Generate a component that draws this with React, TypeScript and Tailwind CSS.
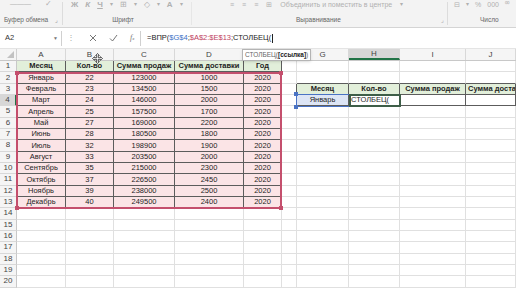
import React from "react"

const cols = [
  { name: "A", w: 49 },
  { name: "B", w: 48 },
  { name: "C", w: 61 },
  { name: "D", w: 69 },
  { name: "E", w: 38 },
  { name: "F", w: 15 },
  { name: "G", w: 52 },
  { name: "H", w: 51 },
  { name: "I", w: 66 },
  { name: "J", w: 50 },
]

const months = ["Январь", "Февраль", "Март", "Апрель", "Май", "Июнь", "Июль", "Август", "Сентябрь", "Октябрь", "Ноябрь", "Декабрь"]
const qty = [22, 23, 24, 25, 27, 28, 32, 33, 35, 37, 39, 40]
const sales = [123000, 134500, 146000, 157500, 169000, 180500, 198900, 203500, 215000, 226500, 238000, 249500]
const delivery = [1000, 1500, 2000, 1700, 2200, 1800, 1900, 2000, 2300, 2450, 2500, 2400]

const ROW_H = "h-[11.33px]"

// which cells belong to a bordered table
function inTable(r: number, c: number) {
  if (r >= 1 && r <= 13 && c >= 0 && c <= 4) return true
  if (r >= 3 && r <= 4 && c >= 6 && c <= 9) return true
  return false
}

function cellBg(r: number, c: number) {
  if (r === 1 && c <= 4) return "bg-[#e2efda] font-bold"
  if (r >= 2 && r <= 13 && c <= 4) return "bg-[#fbe4e6]"
  if (r === 3 && c >= 6) return "bg-[#e2efda] font-bold"
  if (r === 4 && c === 6) return "bg-[#dde5f5]"
  return "bg-white"
}

function cellText(r: number, c: number): string {
  if (r === 1) return ["Месяц", "Кол-во", "Сумма продаж", "Сумма доставки", "Год"][c] ?? ""
  if (r >= 2 && r <= 13) {
    const i = r - 2
    if (c === 0) return months[i]
    if (c === 1) return String(qty[i])
    if (c === 2) return String(sales[i])
    if (c === 3) return String(delivery[i])
    if (c === 4) return "2020"
  }
  if (r === 3) return ["", "", "", "", "", "", "Месяц", "Кол-во", "Сумма продаж", "Сумма доста"][c]
  if (r === 4 && c === 6) return "Январь"
  if (r === 4 && c === 7) return "СТОЛБЕЦ("
  return ""
}

function Cell({ r, c }: { r: number; c: number }) {
  const darkR = inTable(r, c) || inTable(r, c + 1)
  const darkB = inTable(r, c) || inTable(r + 1, c)
  const left = (r === 4 && c === 7) || (r === 3 && c === 9)
  return (
    <div
      style={{ width: cols[c].w }}
      className={`shrink-0 ${ROW_H} border-r border-b overflow-hidden whitespace-nowrap flex items-center text-[7.5px] leading-none text-[#1e1e1e] ${
        darkR ? "border-r-[#5c5c5c]" : "border-r-[#e0e0e0]"
      } ${darkB ? "border-b-[#5c5c5c]" : "border-b-[#e0e0e0]"} ${cellBg(r, c)} ${
        left ? "justify-start pl-[2px]" : "justify-center"
      }`}
    >
      {cellText(r, c)}
    </div>
  )
}

function Ribbon() {
  return (
    <div className="h-[28px] bg-[#f3f3f3] border-b border-[#d4d4d4] flex text-[#b0b0b0] overflow-hidden">
      <div className="w-[63px] shrink-0 flex flex-col border-r border-[#dcdcdc] my-[2px]">
        <div className="h-[10px] flex items-start gap-[14px] pl-[10px] text-[7px] leading-[4px]">
          <span>———</span>
          <span className="text-[8px]">✓</span>
        </div>
        <div className="flex items-center justify-between px-[4px] text-[6.5px] text-[#666] mt-[4px]">
          <span>Буфер обмена</span>
          <span className="text-[6px] text-[#999]">⌟</span>
        </div>
      </div>
      <div className="w-[129px] shrink-0 flex flex-col border-r border-[#e6e6e6] my-[2px]">
        <div className="h-[10px] flex items-start gap-[7px] pl-[8px] text-[8px] leading-[5px] font-bold">
          <span>Ж</span>
          <span className="italic">К</span>
          <span className="underline">Ч</span>
          <span className="text-[6px] font-normal">▾</span>
          <span className="font-normal">⊞</span>
          <span className="text-[6px] font-normal">▾</span>
          <span className="font-normal">◇</span>
          <span className="text-[6px] font-normal">▾</span>
          <span>A</span>
          <span className="text-[6px] font-normal">▾</span>
        </div>
        <div className="text-center text-[6.5px] text-[#666] mt-[4px] pr-[8px]">Шрифт</div>
      </div>
      <div className="w-[256px] shrink-0 flex flex-col border-r border-[#dcdcdc] my-[2px]">
        <div className="h-[10px] flex items-start gap-[8px] pl-[38px] text-[7px] leading-[5px]">
          <span>≡</span>
          <span>≡</span>
          <span>≡</span>
          <span>⊞</span>
          <span>Объединить и поместить в центре</span>
          <span className="text-[6px]">▾</span>
        </div>
        <div className="flex items-center justify-between text-[6.5px] text-[#666] mt-[4px] pl-[104px] pr-[3px]">
          <span>Выравнивание</span>
          <span className="text-[6px] text-[#aaa]">⌟</span>
        </div>
      </div>
      <div className="w-[80px] shrink-0 flex flex-col my-[2px]">
        <div className="h-[10px] flex items-start gap-[6px] pl-[6px] text-[7px] leading-[5px]">
          <span>⊟</span>
          <span className="text-[6px]">▾</span>
          <span>%</span>
          <span>000</span>
          <span>⁰⁰</span>
        </div>
        <div className="text-[6.5px] text-[#666] mt-[4px] pl-[32px]">Число</div>
      </div>
    </div>
  )
}

function FormulaBar() {
  return (
    <div className="h-[21px] bg-white flex items-center text-[7.5px] leading-none border-b border-[#e4e4e4]">
      <div className="w-[62px] h-[15px] shrink-0 border-r border-[#d0d0d0] flex items-center justify-between pl-[5px] pr-[3px] text-[#333]">
        <span>A2</span>
        <span className="text-[5px] text-[#777]">▼</span>
      </div>
      <div className="w-[18px] shrink-0 text-center text-[#aaa] text-[8px]">⋮</div>
      <div className="w-[61px] h-[15px] shrink-0 flex items-center gap-[12px] pl-[9px] text-[#666] border-r border-[#d0d0d0]">
        <svg width="8" height="8" viewBox="0 0 8 8">
          <path d="M1 1 L7 7 M7 1 L1 7" stroke="#666" strokeWidth="0.9" />
        </svg>
        <svg width="9" height="8" viewBox="0 0 9 8">
          <path d="M1 4.5 L3.5 7 L8 1" stroke="#666" strokeWidth="0.9" fill="none" />
        </svg>
        <span className="italic font-['Liberation_Serif',serif] text-[8px] text-[#777]">
          f<span className="text-[5px]">x</span>
        </span>
      </div>
      <div className="pl-[6px] text-[#222] whitespace-nowrap flex items-center">
        <span>=ВПР(</span>
        <span className="text-[#3b6fc5]">$G$4</span>
        <span>;</span>
        <span className="text-[#c0405e]">$A$2:$E$13</span>
        <span>;СТОЛБЕЦ(</span>
        <span className="w-px h-[9px] bg-[#222] ml-[1px]" />
      </div>
    </div>
  )
}

function MoveCursor() {
  return (
    <svg className="absolute left-[92px] top-[4px]" width="11" height="11" viewBox="0 0 11 11">
      <path
        d="M5.5 0.5 L7.3 2.5 L6.3 2.5 L6.3 4.7 L8.5 4.7 L8.5 3.7 L10.5 5.5 L8.5 7.3 L8.5 6.3 L6.3 6.3 L6.3 8.5 L7.3 8.5 L5.5 10.5 L3.7 8.5 L4.7 8.5 L4.7 6.3 L2.5 6.3 L2.5 7.3 L0.5 5.5 L2.5 3.7 L2.5 4.7 L4.7 4.7 L4.7 2.5 L3.7 2.5 Z"
        fill="#fff"
        stroke="#111"
        strokeWidth="0.7"
      />
    </svg>
  )
}

function Handle({ className }: { className: string }) {
  return <div className={`absolute w-[4px] h-[4px] ${className}`} />
}

function Sheet() {
  const rows = Array.from({ length: 20 }, (_, i) => i + 1)
  return (
    <div className="relative">
      <div className="flex h-[12px] bg-[#f5f5f5] border-b border-[#c8c8c8]">
        <div className="w-[17px] shrink-0 border-r border-[#d0d0d0] relative">
          <svg className="absolute right-[2px] bottom-[2px]" width="7" height="7" viewBox="0 0 7 7">
            <path d="M7 0 L7 7 L0 7 Z" fill="#c2c2c2" />
          </svg>
        </div>
        {cols.map((col) => (
          <div
            key={col.name}
            style={{ width: col.w }}
            className={`shrink-0 flex items-center justify-center text-[8px] text-[#444] border-r border-[#d8d8d8] ${
              col.name === "H" ? "bg-[#d7d7d7] border-b-2 border-b-[#217346] text-[#2a2a2a]" : ""
            }`}
          >
            {/* E and F are hidden under the function tooltip */}
            {col.name === "E" || col.name === "F" ? "" : col.name}
          </div>
        ))}
      </div>
      {rows.map((r) => (
        <div key={r} className="flex">
          <div
            className={`w-[17px] shrink-0 ${ROW_H} flex items-center justify-center text-[8px] text-[#444] border-b border-[#d8d8d8] ${
              r === 4 ? "bg-[#d7d7d7] border-r-2 border-r-[#217346]" : "bg-[#f5f5f5] border-r border-r-[#c8c8c8]"
            }`}
          >
            {r}
          </div>
          {cols.map((_, c) => (
            <Cell key={c} r={r} c={c} />
          ))}
        </div>
      ))}

      {/* range highlight $A$2:$E$13 */}
      <div className="absolute left-[16px] top-[22.5px] w-[266px] h-[137px] border-2 border-[#c44f6d] pointer-events-none">
        <Handle className="-left-[3px] -top-[3px] bg-[#c44f6d]" />
        <Handle className="-right-[3px] -top-[3px] bg-[#c44f6d]" />
        <Handle className="-left-[3px] -bottom-[3px] bg-[#c44f6d]" />
        <Handle className="-right-[3px] -bottom-[3px] bg-[#c44f6d]" />
      </div>

      {/* range highlight $G$4 */}
      <div className="absolute left-[296px] top-[45px] w-[54px] h-[13px] border-[1.5px] border-[#4a73c4] pointer-events-none">
        <Handle className="-left-[3px] -top-[3px] bg-[#4a73c4]" />
        <Handle className="-left-[3px] -bottom-[3px] bg-[#4a73c4]" />
      </div>

      {/* active cell H4 */}
      <div className="absolute left-[349px] top-[45px] w-[52px] h-[13px] border-2 border-[#3e5e48] pointer-events-none" />

      {/* function tooltip */}
      <div className="absolute left-[242px] top-[0px] h-[12px] px-[2px] bg-white border border-[#b4b4b4] shadow-sm flex items-center text-[6.5px] text-[#666] whitespace-nowrap">
        СТОЛБЕЦ(<span className="text-[#222] font-bold">[ссылка]</span>)
      </div>

      <MoveCursor />
    </div>
  )
}

export default function App() {
  return (
    <div className="w-[516px] h-[290px] overflow-hidden bg-white font-['Liberation_Sans',Arial,sans-serif]">
      <Ribbon />
      <FormulaBar />
      <Sheet />
    </div>
  )
}
